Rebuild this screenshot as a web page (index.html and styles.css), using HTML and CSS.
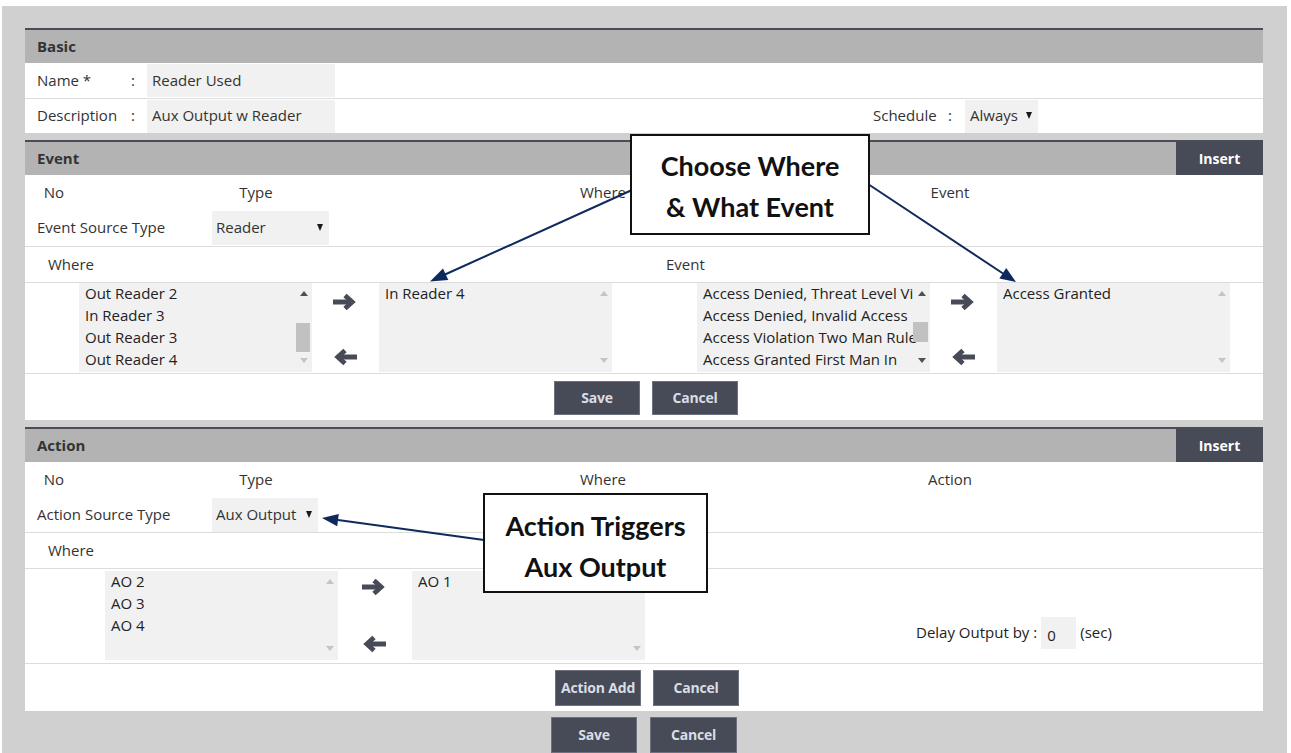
FILE: index.html
```html
<!DOCTYPE html>
<html lang="en">
<head>
<meta charset="utf-8">
<title>Trigger</title>
<link rel="stylesheet" href="styles.css">
</head>
<body>
<div class="page">

  <section class="card">
    <header class="card-head"><h2>Basic</h2></header>
    <div class="row basic sep">
      <span class="lbl">Name *</span><span class="colon">:</span><span class="field">Reader Used</span>
    </div>
    <div class="row basic last">
      <span class="lbl">Description</span><span class="colon">:</span><span class="field">Aux Output w Reader</span>
      <span class="lbl sched">Schedule</span><span class="colon">:</span><span class="select always">Always<i class="caret"></i></span>
    </div>
  </section>

  <section class="card">
    <header class="card-head"><h2>Event</h2><button class="insert">Insert</button></header>
    <div class="cols"><span>No</span><span>Type</span><span>Where</span><span>Event</span></div>
    <div class="row src sep">
      <span class="src-lbl">Event Source Type</span>
      <span class="select reader">Reader<i class="caret"></i></span>
    </div>
    <div class="row where sep"><span>Where</span><span>Event</span></div>
    <div class="lists ev sep">
      <div class="listbox">
        <ul class="items"><li>Out Reader 2</li><li>In Reader 3</li><li>Out Reader 3</li><li>Out Reader 4</li></ul>
        <div class="sbar"><i class="up on"></i><i class="thumb t-reader"></i><i class="down"></i></div>
      </div>
      <div class="movers">
        <svg viewBox="0 0 24 18" width="24" height="18"><path d="M0 9H18" stroke="#474a57" stroke-width="5"/><path d="M12 2.4L19.2 9L12 15.6" fill="none" stroke="#474a57" stroke-width="4.8"/></svg>
        <svg viewBox="0 0 24 18" width="24" height="18"><path d="M24 9H6" stroke="#474a57" stroke-width="5"/><path d="M12 2.4L4.8 9L12 15.6" fill="none" stroke="#474a57" stroke-width="4.8"/></svg>
      </div>
      <div class="listbox">
        <ul class="items"><li>In Reader 4</li></ul>
        <div class="sbar"><i class="up"></i><i class="down"></i></div>
      </div>
      <div class="listbox gap-l">
        <ul class="items"><li>Access Denied, Threat Level Vi</li><li>Access Denied, Invalid Access</li><li>Access Violation Two Man Rule</li><li>Access Granted First Man In</li></ul>
        <div class="sbar"><i class="up on"></i><i class="thumb t-event"></i><i class="down on"></i></div>
      </div>
      <div class="movers">
        <svg viewBox="0 0 24 18" width="24" height="18"><path d="M0 9H18" stroke="#474a57" stroke-width="5"/><path d="M12 2.4L19.2 9L12 15.6" fill="none" stroke="#474a57" stroke-width="4.8"/></svg>
        <svg viewBox="0 0 24 18" width="24" height="18"><path d="M24 9H6" stroke="#474a57" stroke-width="5"/><path d="M12 2.4L4.8 9L12 15.6" fill="none" stroke="#474a57" stroke-width="4.8"/></svg>
      </div>
      <div class="listbox">
        <ul class="items"><li>Access Granted</li></ul>
        <div class="sbar"><i class="up"></i><i class="down"></i></div>
      </div>
    </div>
    <div class="btn-row ev-btns"><button class="btn">Save</button><button class="btn">Cancel</button></div>
  </section>

  <section class="card last-card">
    <header class="card-head"><h2>Action</h2><button class="insert">Insert</button></header>
    <div class="cols"><span>No</span><span>Type</span><span>Where</span><span>Action</span></div>
    <div class="row src sep">
      <span class="src-lbl">Action Source Type</span>
      <span class="select aux">Aux Output<i class="caret"></i></span>
    </div>
    <div class="row where sep"><span>Where</span></div>
    <div class="lists act sep">
      <div class="listbox">
        <ul class="items"><li>AO 2</li><li>AO 3</li><li>AO 4</li></ul>
        <div class="sbar"><i class="up"></i><i class="down"></i></div>
      </div>
      <div class="movers">
        <svg viewBox="0 0 24 18" width="24" height="18"><path d="M0 9H18" stroke="#474a57" stroke-width="5"/><path d="M12 2.4L19.2 9L12 15.6" fill="none" stroke="#474a57" stroke-width="4.8"/></svg>
        <svg viewBox="0 0 24 18" width="24" height="18"><path d="M24 9H6" stroke="#474a57" stroke-width="5"/><path d="M12 2.4L4.8 9L12 15.6" fill="none" stroke="#474a57" stroke-width="4.8"/></svg>
      </div>
      <div class="listbox">
        <ul class="items"><li>AO 1</li></ul>
        <div class="sbar"><i class="up"></i><i class="down"></i></div>
      </div>
      <div class="delay">
        <span>Delay Output by :</span><span class="delay-val">0</span><span>(sec)</span>
      </div>
    </div>
    <div class="btn-row act-btns"><button class="btn">Action Add</button><button class="btn">Cancel</button></div>
  </section>

  <div class="btn-row footer"><button class="btn">Save</button><button class="btn">Cancel</button></div>
</div>

<!-- callouts drawn over the form -->
<svg class="pointers" width="1291" height="753" viewBox="0 0 1291 753">
  <g stroke="#0e2a5c" stroke-width="2" fill="#0e2a5c">
    <line x1="632" y1="190" x2="445" y2="274.5"/>
    <polygon points="430,281.5 448.3,280 443,268.6" stroke="none"/>
    <line x1="868" y1="184" x2="1003" y2="273.5"/>
    <polygon points="1016,282 1006.2,268 999.4,278.4" stroke="none"/>
    <line x1="484" y1="540" x2="338" y2="520"/>
    <polygon points="322,518 337.2,526.3 338.8,514" stroke="none"/>
  </g>
</svg>
<div class="callout c-event">Choose Where<br>&amp; What Event</div>
<div class="callout c-action">Action Triggers<br>Aux Output</div>
</body>
</html>
```

FILE: styles.css
```css
* { box-sizing: border-box; }

body {
  margin: 0;
  background: #fff;
  font-family: "Open Sans", "Liberation Sans", sans-serif;
  font-size: 15px;
  color: #333;
  position: relative;
  width: 1291px;
  height: 753px;
  overflow: hidden;
}

.page {
  margin: 6px 4px 0 2px;
  height: 747px;
  background: #d0d0d0;
  padding: 22px 24px 0 23px;
  overflow: hidden;
}

/* cards */
.card {
  background: #fff;
  border-top: 2px solid #4a4c58;
  margin-bottom: 7px;
}
.card.last-card { margin-bottom: 6px; }

.card-head {
  height: 33px;
  background: #b3b3b3;
  display: flex;
  align-items: center;
  justify-content: space-between;
}
.card-head h2 {
  margin: 0 0 2px;
  padding-left: 12px;
  font-size: 15px;
  font-weight: 700;
  color: #333;
}

.insert {
  height: 33px;
  width: 87px;
  border: 0;
  background: #474a57;
  color: #fff;
  font: 700 14px "Open Sans", sans-serif;
  padding: 0 0 1px;
}

.sep { border-bottom: 1px solid #dcdcdc; }

.row {
  display: flex;
  align-items: center;
}

/* basic */
.row.basic { height: 36px; padding-left: 12px; }
.row.basic.last { height: 34px; }
.lbl, .colon, .src-lbl, .row.where span, .cols span { padding-bottom: 2px; }
.lbl { width: 94px; }
.colon { width: 16px; }
.field {
  width: 188px;
  height: 33px;
  background: #f1f1f1;
  padding: 0 0 2px 5px;
  display: flex;
  align-items: center;
}
.lbl.sched { margin-left: 538px; width: 75px; }
.colon + .select { margin-left: 1px; }

.select {
  height: 33px;
  background: #f1f1f1;
  padding: 0 6px 2px 4px;
  display: flex;
  align-items: center;
  justify-content: space-between;
}
.select.always { width: 73px; padding-left: 5px; }
.select.reader { width: 117px; height: 34px; }
.select.aux { width: 106px; height: 34px; }

.caret {
  width: 0;
  height: 0;
  border-left: 3.5px solid transparent;
  border-right: 3.5px solid transparent;
  border-top: 7px solid #1a1a1a;
  margin-top: 1px;
}

/* column captions */
.cols {
  height: 35px;
  display: grid;
  grid-template-columns: 58px 346px 348px 346px 1fr;
  align-items: center;
  text-align: center;
}

.row.src { height: 37px; padding-left: 12px; }
.row.src .src-lbl { width: 175px; }
.card.last-card .row.src { height: 36px; }

.row.where {
  height: 36px;
  padding-left: 23px;
  display: grid;
  grid-template-columns: 618px 1fr;
}

/* list boxes */
.lists {
  display: flex;
  align-items: flex-start;
}
.lists.ev { height: 91px; padding-left: 54px; }
.lists.act { height: 95px; padding-left: 80px; padding-top: 2px; }

.listbox {
  width: 233px;
  height: 89px;
  background: #f1f1f1;
  color: #222;
  position: relative;
  overflow: hidden;
}
.listbox.gap-l { margin-left: 85px; }

.items {
  list-style: none;
  margin: -1px 0 0;
  padding: 0 0 0 6px;
  white-space: nowrap;
  line-height: 22px;
}

/* scrollbar sits over the right edge of the list */
.sbar {
  position: absolute;
  top: 0;
  right: 0;
  bottom: 0;
  width: 17px;
}
.sbar .up,
.sbar .down {
  position: absolute;
  left: 5px;
  width: 0;
  height: 0;
  border-left: 4px solid transparent;
  border-right: 4px solid transparent;
}
.sbar .up { top: 8px; border-bottom: 5px solid #c4c4c4; }
.sbar .down { bottom: 9px; border-top: 5px solid #c4c4c4; }
.sbar .up.on { border-bottom-color: #505050; }
.sbar .down.on { border-top-color: #505050; }

.thumb {
  position: absolute;
  left: 1px;
  width: 14px;
  background: #c1c1c1;
}
.t-reader { top: 40px; height: 29px; }
.t-event { top: 39px; height: 20px; left: 0; width: 15px; }

.movers {
  width: 24px;
  height: 89px;
  margin: 0 22px 0 21px;
  padding: 10px 0 6px;
  display: flex;
  flex-direction: column;
  justify-content: space-between;
}
.movers svg { display: block; }
.lists.act .movers { margin: 0 26px 0 24px; padding: 7px 0 7px; }

.delay {
  margin: 46px 0 0 271px;
  display: flex;
  align-items: center;
  color: #222;
}
.delay > span:first-child,
.delay > span:last-child { padding-bottom: 3px; }
.delay-val {
  width: 35px;
  height: 32px;
  margin: 0 4px 0 4px;
  background: #f1f1f1;
  padding: 4px 0 0 6px;
  display: flex;
  align-items: center;
}

/* buttons */
.btn-row {
  display: flex;
  justify-content: center;
  gap: 12px;
}
.ev-btns { height: 46px; padding: 7px 0 0 4px; }
.act-btns { height: 47px; padding: 6px 0 0 6px; }
.footer { gap: 13px; }

.btn {
  width: 86px;
  height: 34px;
  background: #474a57;
  border: 1px solid #6d7180;
  color: #d9dde4;
  font: 700 14px "Open Sans", sans-serif;
  letter-spacing: -0.2px;
  padding: 0 0 1px;
}
.act-btns .btn,
.footer .btn { height: 36px; }
.footer .btn:last-child { width: 87px; }

/* callouts */
.pointers {
  position: absolute;
  left: 0;
  top: 0;
  pointer-events: none;
}
.callout {
  position: absolute;
  background: #fff;
  border: 2px solid #111;
  font-family: Lato, "Liberation Sans", sans-serif;
  font-weight: 700;
  font-size: 27px;
  line-height: 41px;
  color: #111;
  text-align: center;
}
.c-event { left: 630px; top: 134px; width: 240px; height: 101px; padding-top: 9px; }
.c-action { left: 483px; top: 493px; width: 225px; height: 100px; padding-top: 10px; }
```
